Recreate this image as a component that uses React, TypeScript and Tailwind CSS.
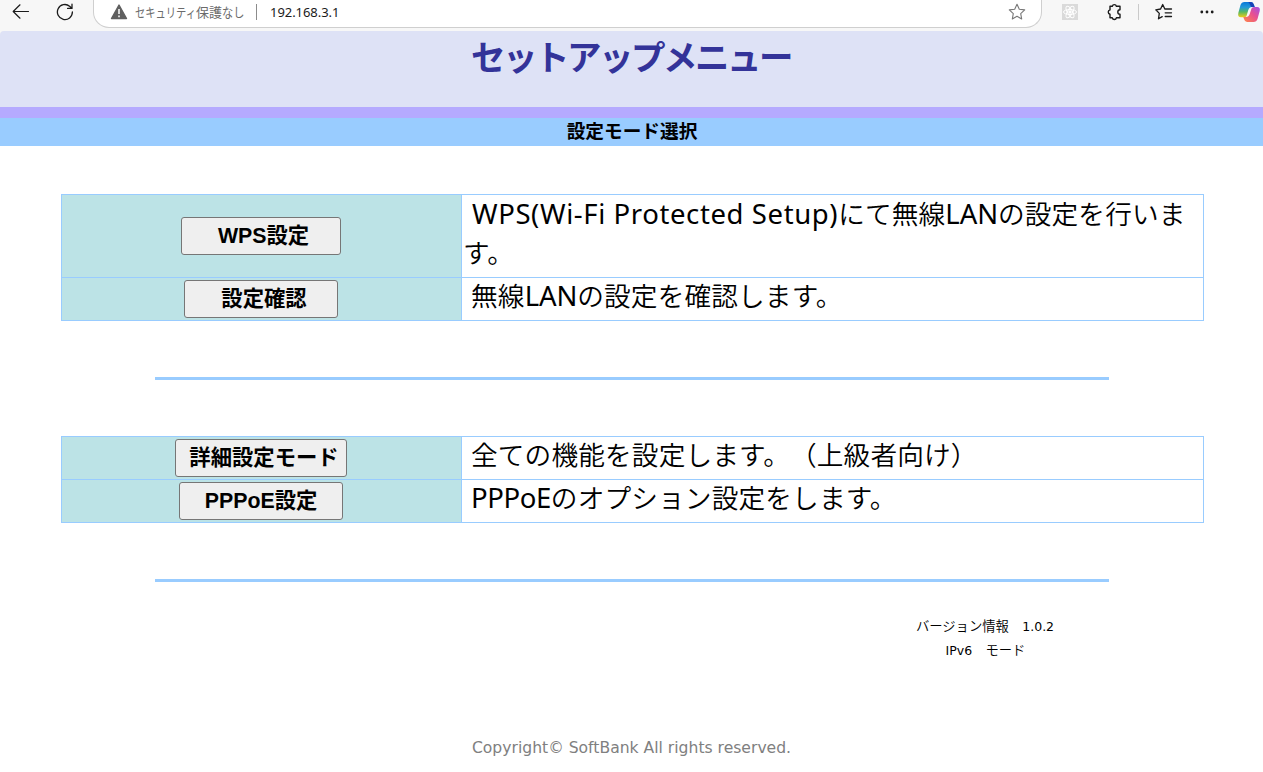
import React from "react";

const cjk = "font-['DejaVu_Sans','Noto_Sans_CJK_JP',sans-serif]";

function BrowserBar() {
  return (
    <div className="flex h-[31px] items-start overflow-hidden bg-[#f7f7f7] font-['Noto_Sans','Noto_Sans_CJK_JP',sans-serif]">
      <svg className="ml-3 mt-[3px] shrink-0" width="18" height="18" viewBox="0 0 18 18" fill="none" stroke="#1b1b1b" strokeWidth="1.2" strokeLinecap="round" strokeLinejoin="round">
        <path d="M16.5 8.5H1.2M8 1.8 1.2 8.5 8 15.2" />
      </svg>
      <svg className="ml-[26px] mt-[3px] shrink-0" width="18" height="18" viewBox="0 0 18 18" fill="none" stroke="#1b1b1b" strokeWidth="1.3" strokeLinecap="round" strokeLinejoin="round">
        <path d="M16.4 9A7.5 7.5 0 1 1 13.6 3.2L15.8 5.2M16 1.2V5.4H11.6" />
      </svg>
      <div className="ml-[19px] -mt-1 flex h-8 w-[949px] shrink-0 items-center rounded-b-2xl border border-t-0 border-[#cfcfcf] bg-white">
        <svg className="ml-4 mt-px shrink-0" width="18" height="16" viewBox="0 0 18 16">
          <path d="M9 1 16.5 14.5H1.5Z" fill="#5f5f5f" stroke="#5f5f5f" strokeWidth="1.4" strokeLinejoin="round" />
          <path d="M9 5V10M9 11.6V13.2" stroke="white" strokeWidth="1.5" />
        </svg>
        <div className="ml-[7px] flex h-5 w-[110px] items-center whitespace-nowrap text-[13px] leading-5 text-[#6b6b6b]">
          <span className="w-[61px] origin-left scale-x-[0.79]">セキュリティ</span>
          <span className="w-[26px]">保護</span>
          <span className="origin-left scale-x-[0.86]">なし</span>
        </div>
        <span className="ml-[11px] h-4 w-px bg-[#8c8c8c]" />
        <span className="ml-[13px] text-[13px] leading-5 tracking-[-0.05px] text-[#1b1b1b]">192.168.3.1</span>
        <svg className="ml-auto mr-[15px] shrink-0" width="18" height="18" viewBox="0 0 18 18" fill="none" stroke="#777" strokeWidth="1.1" strokeLinejoin="round">
          <path d="M9 1.3 11.3 6.2 16.7 6.9 12.7 10.6 13.7 16 9 13.3 4.3 16 5.3 10.6 1.3 6.9 6.7 6.2Z" />
        </svg>
      </div>
      <svg className="ml-5 mt-1 shrink-0" width="16" height="16" viewBox="0 0 16 16" fill="none" stroke="white" strokeWidth="1">
        <rect width="16" height="16" fill="#dadada" stroke="none" />
        <ellipse cx="8" cy="8" rx="6.5" ry="2.5" />
        <ellipse cx="8" cy="8" rx="6.5" ry="2.5" transform="rotate(60 8 8)" />
        <ellipse cx="8" cy="8" rx="6.5" ry="2.5" transform="rotate(120 8 8)" />
        <circle cx="8" cy="8" r="1.2" fill="white" />
      </svg>
      <svg className="ml-7 mt-[3px] shrink-0" width="18" height="18" viewBox="0 0 18 18" fill="none" stroke="#1b1b1b" strokeWidth="1.4" strokeLinejoin="round">
        <path d="M4 3.3H6.3A2.1 2.1 0 0 1 10.4 3.3H14V6.8A2.2 2.2 0 1 0 14 11.2V14.8H10.4A2.1 2.1 0 0 1 6.3 14.8H4V11.2A2.2 2.2 0 0 1 4 6.9Z" />
      </svg>
      <span className="ml-[14px] mt-1 h-4 w-px shrink-0 bg-[#cacaca]" />
      <svg className="ml-4 mt-[3px] shrink-0" width="18" height="18" viewBox="0 0 18 18" fill="none" stroke="#1b1b1b" strokeWidth="1.3" strokeLinejoin="round" strokeLinecap="round">
        <path d="M11 6 9.8 6 7.7 1.5 5.6 6 .8 6.8 4.3 10.4 3.5 15.8 7.2 13.6M11 6H16.5M10.2 9.8H16.5M10.2 13.5H16.5" />
      </svg>
      <svg className="ml-[26px] mt-1 shrink-0" width="16" height="16" viewBox="0 0 16 16" fill="#1b1b1b">
        <circle cx="2.8" cy="8" r="1.4" /><circle cx="8" cy="8" r="1.4" /><circle cx="13.2" cy="8" r="1.4" />
      </svg>
      <svg className="ml-[22px] mt-px shrink-0" width="24" height="22" viewBox="0 0 24 22">
        <defs>
          <linearGradient id="copilotLeft" x1="0" y1="0" x2="0" y2="1">
            <stop offset="0" stopColor="#0878d8" /><stop offset=".35" stopColor="#209ad8" /><stop offset=".65" stopColor="#58b860" /><stop offset="1" stopColor="#f0cc18" />
          </linearGradient>
          <linearGradient id="copilotRight" x1="1" y1="0" x2="0" y2="1">
            <stop offset="0" stopColor="#a050e8" /><stop offset=".45" stopColor="#e85090" /><stop offset="1" stopColor="#ff8848" />
          </linearGradient>
        </defs>
        <path d="M7.5 1H14Q16.2 1 17 4L17.7 6H15Q12.3 6 11.3 9L9.5 15Q9 16.3 7 16.3H4Q.5 16.3 1.3 12L3.5 4Q4.5 1 7.5 1Z" fill="url(#copilotLeft)" />
        <path d="M11 1H14Q16.2 1 17 4L17.7 6H14Q12.5 1.5 11 1Z" fill="#1644b8" />
        <path d="M16.5 21H10Q7.8 21 7 18L6.3 16H9Q11.7 16 12.7 13L14.5 7.5Q15 6 17 6H20Q23.5 6 22.7 10L20.5 18Q19.5 21 16.5 21Z" fill="url(#copilotRight)" />
      </svg>
    </div>
  );
}

function ModeButton({ children, className }: { children: React.ReactNode; className: string }) {
  return (
    <button className={`h-[38px] whitespace-pre rounded-[3px] border border-[#767676] bg-[#efefef] text-center font-['Liberation_Sans','Noto_Sans_CJK_JP',sans-serif] text-[21.33px] font-bold leading-8 text-black ${className}`}>
      {children}
    </button>
  );
}

function Row({ button, children, className }: { button: React.ReactNode; children: React.ReactNode; className: string }) {
  return (
    <div className={`flex border-b border-[#99ccff] ${className}`}>
      <div className="flex w-[399px] shrink-0 items-center justify-center bg-[#bce3e6] pr-0.5">{button}</div>
      <div className="flex-1 whitespace-nowrap border-l border-[#99ccff] pl-px text-[26.67px] font-[350] leading-[38px] tracking-[0.15px] [text-spacing-trim:space-all]">{children}</div>
    </div>
  );
}

function Latin({ children, className = "tracking-[-0.1px]" }: { children: React.ReactNode; className?: string }) {
  return <span className={`font-['Noto_Sans',sans-serif] text-[27.5px] font-normal leading-none ${className}`}>{children}</span>;
}

function Rule() {
  return <div className="ml-[155px] h-[3px] w-[954px] bg-[#99ccff]" />;
}

export default function App() {
  return (
    <div className={`h-[772px] w-[1263px] overflow-hidden bg-white text-black ${cjk}`}>
      <BrowserBar />
      <header>
        <div className="bg-[#f7f7f7]">
          <div className="h-[76px] rounded-t-[4px] bg-[#dee2f6] pt-[3px] text-center">
            <h1 className="pr-px text-[34.5px] font-bold leading-[48px] tracking-[-2.5px] text-[#333399]">セットアップメニュー</h1>
          </div>
        </div>
        <div className="h-[11px] bg-[#b5aaff]" />
        <h2 className="h-7 bg-[#99ccff] pl-px text-center text-[18.67px] font-bold leading-[27px]">設定モード選択</h2>
      </header>
      <main className="pt-12">
        <section className="ml-[61px] w-[1143px] border border-b-0 border-[#99ccff]">
          <Row className="h-[83px]" button={<ModeButton className="w-40 pl-[6px]">WPS設定</ModeButton>}>
            <p className="pl-[9px] leading-[39px]"><Latin className="tracking-[0.6px]">WPS(Wi-Fi Protected Setup)</Latin>にて無線<Latin>LAN</Latin>の設定を行いま</p>
            <p className="leading-10">す。</p>
          </Row>
          <Row className="h-[43px]" button={<ModeButton className="w-[154px] pl-[7px]">設定確認</ModeButton>}>
            <p className="pl-2">無線<Latin>LAN</Latin>の設定を確認します。</p>
          </Row>
        </section>
        <div className="pt-14"><Rule /></div>
        <section className="ml-[61px] mt-14 w-[1143px] border border-b-0 border-[#99ccff]">
          <Row className="h-[43px]" button={<ModeButton className="w-[172px] pl-[7px]">詳細設定モード</ModeButton>}>
            <p className="pl-2">全ての機能を設定します。（上級者向け）</p>
          </Row>
          <Row className="h-[43px]" button={<ModeButton className="w-[164px] pl-px">PPPoE設定</ModeButton>}>
            <p className="pl-2"><Latin className="tracking-[-0.4px]">PPPoE</Latin>のオプション設定をします。</p>
          </Row>
        </section>
        <div className="pt-14"><Rule /></div>
        <div className="ml-[861px] mt-[33px] w-[248px] text-center text-[13.33px] font-[350] leading-6">
          <p>バージョン情報　<span className="text-[12.5px] font-normal">1.0.2</span></p>
          <p className="pl-px"><span className="text-[12.5px] font-normal">IPv6</span>　モード</p>
        </div>
      </main>
      <footer className="mt-[73px] text-center text-[15.6px] leading-6 text-[#808080]">Copyright© SoftBank All rights reserved.</footer>
    </div>
  );
}
